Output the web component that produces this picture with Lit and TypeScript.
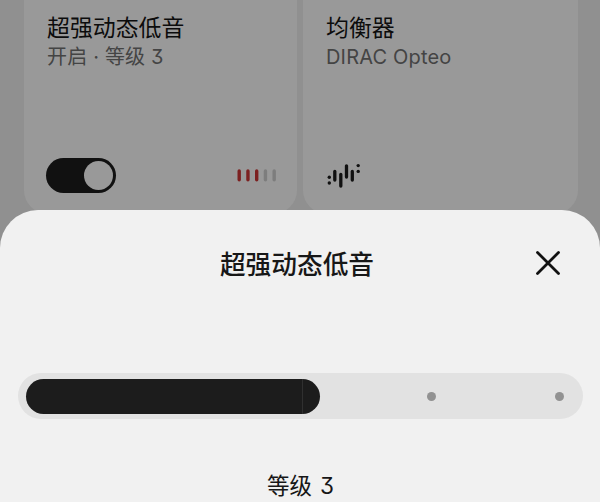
import { LitElement, html, css, svg } from "lit";
import { customElement, property } from "lit/decorators.js";

@customElement("feature-card")
class FeatureCard extends LitElement {
  @property() heading = "";
  @property() detail = "";
  static styles = css`
    :host {
      display: flex;
      flex-direction: column;
      box-sizing: border-box;
      height: 214px;
      padding: 12px 22px 21px 23px;
      background: #999;
      border-radius: 0 0 24px 24px;
    }
    .heading {
      font-size: 22.9px;
      line-height: 32px;
      color: #0c0c0c;
      white-space: nowrap;
    }
    .detail {
      margin-top: -1px;
      font-size: 20px;
      line-height: 28px;
      letter-spacing: 0.18px;
      color: #444;
      white-space: nowrap;
    }
    .foot {
      display: flex;
      align-items: center;
      justify-content: space-between;
      height: 35px;
      margin-top: auto;
    }
  `;
  render() {
    return html`
      <div class="heading">${this.heading}</div>
      <div class="detail">${this.detail}</div>
      <div class="foot"><slot></slot></div>
    `;
  }
}

@customElement("level-slider")
class LevelSlider extends LitElement {
  static styles = css`
    :host {
      display: flex;
      align-items: center;
      box-sizing: border-box;
      height: 46px;
      border-radius: 23px;
      padding: 0 19px 0 8px;
      background: #e2e2e2;
    }
    .fill {
      display: flex;
      justify-content: flex-end;
      width: 294px;
      height: 35px;
      border-radius: 18px;
      background: #1c1c1c;
    }
    .seam {
      width: 1px;
      margin-right: 17px;
      background: #303030;
    }
    .stops {
      flex: 1;
      display: flex;
      justify-content: space-between;
      padding-left: 107px;
    }
    .stop {
      width: 9px;
      height: 9px;
      border-radius: 50%;
      background: #929292;
    }
  `;
  render() {
    return html`
      <div class="fill"><div class="seam"></div></div>
      <div class="stops"><div class="stop"></div><div class="stop"></div></div>
    `;
  }
}

const bars = [0, 1, 2, 3, 4];
const wave = [
  [8.8, 9.5, 18],
  [14.8, 12.4, 24],
  [20.5, 3.8, 15.1],
  [26.3, 9.5, 18],
];
const dots = [
  [3.3, 15.3],
  [3.3, 21],
  [32.2, 3.6],
  [32.2, 9.4],
];

@customElement("app-root")
class AppRoot extends LitElement {
  static styles = css`
    :host {
      display: flex;
      flex-direction: column;
      width: 600px;
      height: 502px;
      overflow: hidden;
      background: #909090;
      font-family: Inter, "Noto Sans CJK SC", sans-serif;
      font-feature-settings: "cv09";
    }
    .cards {
      display: grid;
      grid-template-columns: 273px 275px;
      gap: 6px;
      padding: 0 22px 0 24px;
      height: 210px;
      flex: none;
    }
    .toggle {
      display: flex;
      justify-content: flex-end;
      align-items: center;
      box-sizing: border-box;
      width: 70px;
      height: 35px;
      margin-left: -1px;
      padding-right: 3px;
      border-radius: 18px;
      background: #111;
    }
    .knob {
      width: 29px;
      height: 29px;
      border-radius: 50%;
      background: #999;
    }
    .meter {
      display: block;
      overflow: visible;
    }
    .wave {
      display: block;
    }
    .sheet {
      position: relative;
      flex: 1;
      display: flex;
      flex-direction: column;
      background: #f1f1f1;
      border-radius: 38px 38px 0 0;
      color: #171717;
    }
    .header {
      display: grid;
      grid-template-columns: 1fr auto 1fr;
      align-items: center;
      height: 106px;
      padding: 0 39px 0 33px;
    }
    .title {
      grid-column: 2;
      margin-bottom: 2px;
      font-size: 25.7px;
      font-weight: 500;
      white-space: nowrap;
    }
    .close {
      justify-self: end;
      display: block;
    }
    level-slider {
      margin: 57px 17px 0 18px;
    }
    .level {
      margin-top: 51px;
      padding-left: 1px;
      text-align: center;
      font-size: 22.5px;
      word-spacing: 1.5px;
      line-height: 32px;
    }
  `;
  render() {
    return html`
      <div class="cards">
        <feature-card heading="超强动态低音" detail="开启 · 等级 3">
          <div class="toggle"><div class="knob"></div></div>
          <svg class="meter" width="39" height="13" viewBox="0 0 39 13">
            ${bars.map(
              (i) => svg`<path d="M${3.2 + i * 8.75} 2V10.8" stroke=${i < 3 ? "#7c2020" : "#7d7d7d"} stroke-width="3.4" stroke-linecap="round" />`
            )}
          </svg>
        </feature-card>
        <feature-card heading="均衡器" detail="DIRAC Opteo">
          <svg class="wave" width="36" height="28" viewBox="0 0 36 28">
            ${wave.map(
              ([x, a, b]) => svg`<path d="M${x} ${a}V${b}" stroke="#111" stroke-width="3.3" stroke-linecap="round" />`
            )}
            ${dots.map(([x, y]) => svg`<circle cx=${x} cy=${y} r="1.7" fill="#111" />`)}
          </svg>
        </feature-card>
      </div>
      <div class="sheet">
        <div class="header">
          <div class="title">超强动态低音</div>
          <svg class="close" width="26" height="26" viewBox="0 0 26 26">
            <path d="M2.5 2.5L23.5 23.5M23.5 2.5L2.5 23.5" stroke="#111" stroke-width="2.8" stroke-linecap="round" />
          </svg>
        </div>
        <level-slider></level-slider>
        <div class="level">等级 3</div>
      </div>
    `;
  }
}
